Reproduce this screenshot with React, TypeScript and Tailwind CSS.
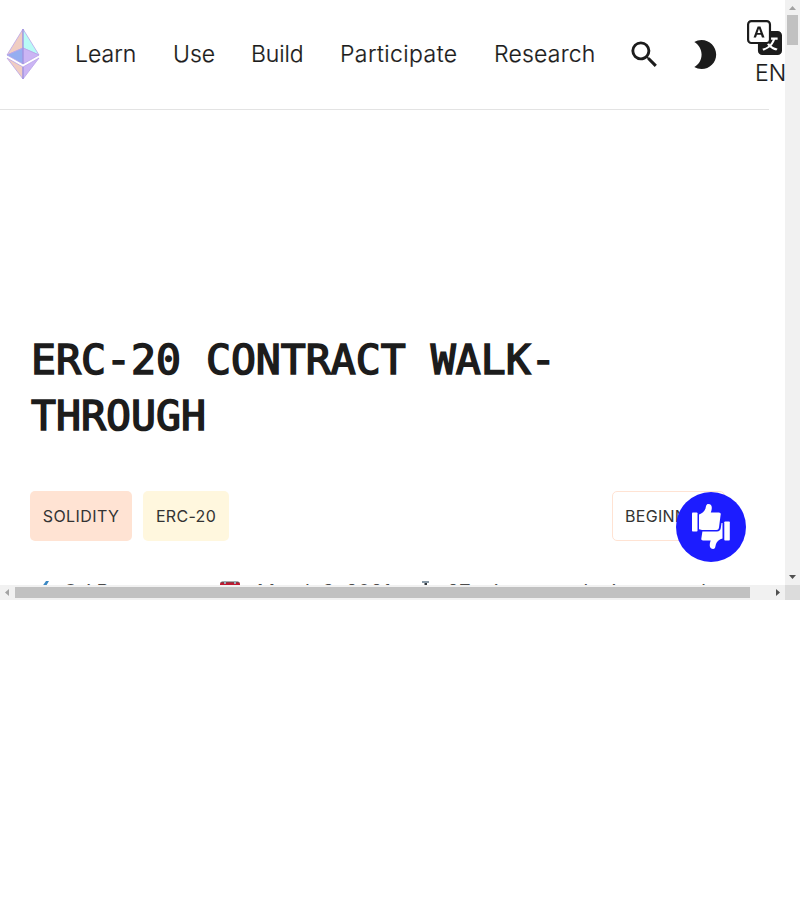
import React from "react";
import { MdSearch, MdBrightness2 } from "react-icons/md";
import { BsTranslate } from "react-icons/bs";

function EthLogo() {
  return (
    <svg className="mb-px h-[52px] w-[34px] shrink-0" viewBox="0 0 34 52" stroke="#b9a3e8" strokeWidth="0.8" strokeLinejoin="round">
      <path d="M17 1 1 27l16-7z" fill="#f0cdc2" />
      <path d="m17 1 16 26-16-7z" fill="#b8fbf6" />
      <path d="m1 27 16-7v16z" fill="#95aef0" />
      <path d="m33 27-16-7v16z" fill="#cbb5f4" />
      <path d="m1 30 16 9v12z" fill="#f0cdc2" />
      <path d="m33 30-16 9v12z" fill="#cbb5f4" />
      <path d="M17 1v35M17 39v12" stroke="#8e86dc" />
    </svg>
  );
}

function Feedback() {
  return (
    <button className="absolute left-[676px] top-[492px] flex size-[70px] items-center justify-center rounded-full bg-[#1c1cff]">
      <svg className="size-[70px]" viewBox="0 0 70 70" fill="#fff">
        <rect x="16" y="20.5" width="5.5" height="19" rx="0.8" />
        <path d="M23 22.500c3-1 5.500-3 6.500-6 .6-1.800.5-4.500 2.800-4.500 4 0 4.200 4 2.500 8.500h8c1.800 0 2.200 1.200 1.800 2.500l-1.600 12.500c-.3 1.700-1 2.500-2.500 2.500H27c-1.500 0-2.500-.8-4-.8z" />
        <rect x="48.300" y="29.500" width="5.500" height="19" rx="0.8" />
        <path d="M46.500 31v15.500c-3 .8-5.500 2.500-6.500 5.500-.6 1.800-.5 5-2.800 5-3.700 0-4.200-4-2.500-8.500h-7.500c-1.800 0-2.200-1.200-1.800-2.500l1-6.500H41c2.200 0 3.500-1.200 3.800-3.500l.7-5z" />
      </svg>
    </button>
  );
}

export default function App() {
  return (
    <div className="h-[900px] w-[800px] overflow-hidden bg-white font-['Inter',sans-serif] text-[#1c1c1c]">
      <div className="relative flex h-[600px] flex-col overflow-hidden">
        <div className="flex h-[585px]">
          <div className="h-full w-[785px] overflow-hidden">
            <nav className="flex h-[110px] w-[769px] items-center border-b border-[#e3e3e3] pl-1.5 text-[23px] font-light whitespace-nowrap [-webkit-text-stroke:0.2px_#1c1c1c]">
              <EthLogo />
              <span className="ml-[35px] w-[98px] shrink-0">Learn</span>
              <span className="w-[78px] shrink-0">Use</span>
              <span className="w-[89px] shrink-0 tracking-[-0.1px]">Build</span>
              <span className="w-[154px] shrink-0 tracking-[0.42px]">Participate</span>
              <span className="w-[132px] shrink-0 tracking-[0.2px]">Research</span>
              <MdSearch className="ml-px size-[35px] shrink-0" strokeWidth={0} />
              <MdBrightness2 className="ml-[25px] size-[35px] shrink-0" />
              <div className="ml-[25px] flex w-10 shrink-0 flex-col">
                <BsTranslate className="mt-0.5 size-[35px]" />
                <span className="pl-2 leading-9">EN</span>
              </div>
            </nav>
            <main className="px-[30px] pt-[222px]">
              <h1 className="pl-px font-['DejaVu_Sans_Mono',monospace] text-[41.5px] leading-[56px] font-normal [-webkit-text-stroke:1.6px_#1c1c1c]">
                ERC-20 CONTRACT WALK-<br />THROUGH
              </h1>
              <div className="mt-[47px] flex justify-between text-base font-normal text-[#333]">
                <div className="flex gap-[11px]">
                  <span className="flex h-[50px] w-[102px] items-center justify-center rounded-[5px] bg-[#ffe3d3] tracking-[0.4px]">SOLIDITY</span>
                  <span className="flex h-[50px] w-[86px] items-center justify-center rounded-[5px] bg-[#fff7de] tracking-[0.3px]">ERC-20</span>
                </div>
                <span className="mr-[30px] flex h-[50px] w-[113px] items-center rounded-[5px] border border-[#ffe3d3] pl-3 tracking-[0.3px]">BEGINNER</span>
              </div>
              <div className="mt-[38px] flex h-8 items-start text-[20px] leading-[26px] font-normal whitespace-nowrap text-[#4c4c4c]">
                <svg className="mt-0.5 ml-2 size-5" viewBox="0 0 20 20"><path d="M8 0h3L5 10H1z" fill="#3b88c3" /></svg>
                <span className="ml-[5px] w-[156px]">Ori Pomerantz</span>
                <svg className="mt-0.5 size-[22px]" viewBox="0 0 22 22"><path d="M1 3q0-2 2-2h16q2 0 2 2v18H1z" fill="#be1931" /><path d="M2 2q0-1 1-1h16q1 0 1 1" fill="none" stroke="#58595b" /><path d="M6 0v3M16 0v3" stroke="#99aab5" strokeWidth="2" /></svg>
                <span className="ml-4 w-[162px]">March 9, 2021</span>
                <svg className="mt-0.5 size-4" viewBox="0 0 16 16"><path d="M3 0h7v2H3z" fill="#8899a6" /><path d="M5.500 2h2.500v2H5.500z" fill="#31373d" /></svg>
                <span className="ml-3">27 minute read minute read</span>
              </div>
            </main>
          </div>
          <div className="flex w-[15px] flex-col items-center bg-[#f1f1f1]">
            <svg className="size-[15px]" viewBox="0 0 15 15"><path d="m4 10 3.500-4 3.500 4z" fill="#a3a3a3" /></svg>
            <div className="h-[30px] w-[11px] bg-[#c1c1c1]" />
            <svg className="mt-auto size-[15px]" viewBox="0 0 15 15"><path d="m4 5 3.500 4L11 5z" fill="#505050" /></svg>
          </div>
        </div>
        <div className="flex h-[15px] items-center bg-[#f1f1f1]">
          <svg className="size-[15px]" viewBox="0 0 15 15"><path d="M9 4 5 7.500 9 11z" fill="#a3a3a3" /></svg>
          <div className="h-[11px] w-[735px] bg-[#c1c1c1]" />
          <svg className="ml-5 size-[15px]" viewBox="0 0 15 15"><path d="m6 4 4 3.500L6 11z" fill="#505050" /></svg>
          <div className="size-[15px] bg-[#dcdcdc]" />
        </div>
        <Feedback />
      </div>
    </div>
  );
}
